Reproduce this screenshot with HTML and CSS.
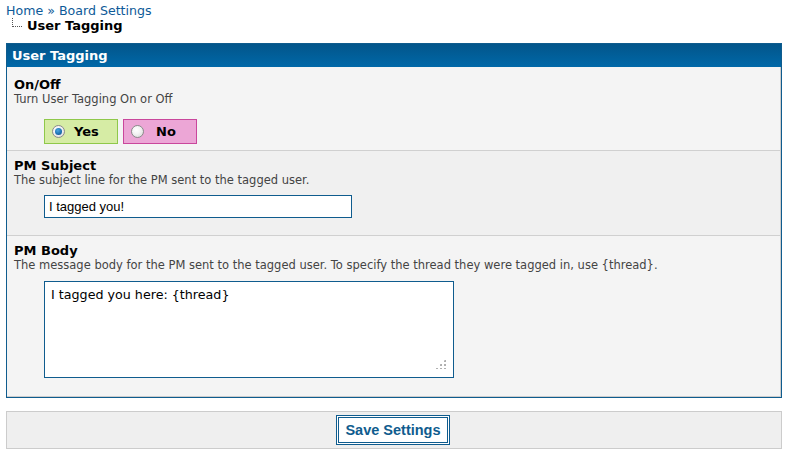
FILE: index.html
```html
<!DOCTYPE html>
<html>
<head>
<meta charset="utf-8">
<link rel="stylesheet" href="styles.css">
</head>
<body>
<div class="nav">
  <div class="crumbs"><a href="#">Home</a> » <a href="#">Board Settings</a></div>
  <div class="active"><span class="tree"></span>User Tagging</div>
</div>
<form class="form">
  <div class="panel">
    <div class="panel-title">User Tagging</div>
    <div class="panel-body">
      <div class="row row-a row-first">
        <div class="label">On/Off</div>
        <div class="desc">Turn User Tagging On or Off</div>
        <div class="control radios">
          <label class="choice yes"><span class="radio checked"></span>Yes</label>
          <label class="choice no"><span class="radio"></span>No</label>
        </div>
      </div>
      <div class="row row-b">
        <div class="label">PM Subject</div>
        <div class="desc">The subject line for the PM sent to the tagged user.</div>
        <div class="control ctl-text">
          <div class="textbox">I tagged you!</div>
        </div>
      </div>
      <div class="row row-a row-last">
        <div class="label">PM Body</div>
        <div class="desc">The message body for the PM sent to the tagged user. To specify the thread they were tagged in, use {thread}.</div>
        <div class="control ctl-area">
          <div class="textarea">I tagged you here: {thread}<span class="grip"></span></div>
        </div>
      </div>
    </div>
  </div>
  <div class="buttons">
    <button type="button" class="submit">Save Settings</button>
  </div>
</form>
</body>
</html>
```
FILE: styles.css
```css
html, body {
  margin: 0;
  padding: 0;
  background: #fff;
}
body {
  padding: 3px 4px 0 6px;
  font-family: "DejaVu Sans", Verdana, sans-serif;
  font-size: 13px;
  color: #000;
}
a {
  color: #0d5a98;
  text-decoration: none;
}
.nav {
  line-height: 15px;
}
.crumbs {
  color: #0d5a98;
  font-size: 12.6px;
}
.active {
  font-weight: bold;
  display: flex;
  align-items: center;
}
.tree {
  display: inline-block;
  width: 9px;
  height: 8px;
  margin: -6px 5px 0 6px;
  border-left: 1px dotted #555;
  border-bottom: 1px dotted #555;
}
.form {
  margin-top: 10px;
}
.panel {
  border: 1px solid #0f5c8e;
}
.panel-title {
  height: 23px;
  line-height: 24px;
  padding-left: 5px;
  color: #fff;
  font-weight: bold;
  background: linear-gradient(#03558a, #0068a8);
}
.panel-body {
  border-right: 1px solid #ccc;
  border-bottom: 1px solid #ccc;
}
.row {
  padding: 8px 7px 0 7px;
  border-bottom: 1px solid #d0d0d0;
}
.row-first {
  padding-top: 11px;
}
.row-last {
  border-bottom: none;
}
.row-a {
  background: #f4f4f4;
}
.row-b {
  background: #f0f0f0;
}
.label {
  font-weight: bold;
  line-height: 14px;
}
.desc {
  font-size: 11.5px;
  line-height: 14px;
  color: #444;
}
.control {
  padding-left: 30px;
}
.radios {
  display: flex;
  gap: 5px;
  padding-top: 13px;
  padding-bottom: 6px;
}
.choice {
  box-sizing: border-box;
  width: 74px;
  height: 25px;
  display: flex;
  align-items: center;
  font-weight: bold;
  padding-left: 7px;
}
.yes {
  background: #d6eca5;
  border: 1px solid #8fc84a;
}
.no {
  background: #eca6d6;
  border: 1px solid #c9479c;
}
.radio {
  box-sizing: border-box;
  width: 13px;
  height: 13px;
  border-radius: 50%;
  border: 1px solid #8a8a8a;
  background: radial-gradient(circle at 40% 35%, #fff 0, #f4f4f4 40%, #d4d4d4 100%);
  margin-right: 9px;
  position: relative;
}
.no .radio {
  margin-right: 12px;
}
.radio.checked::after {
  content: "";
  position: absolute;
  left: 2px;
  top: 2px;
  width: 7px;
  height: 7px;
  border-radius: 50%;
  background: radial-gradient(circle at 40% 35%, #4aa6e0 0, #1a6fb0 60%, #0b4a80 100%);
}
.ctl-text {
  padding-top: 8px;
  padding-bottom: 17px;
}
.textbox {
  box-sizing: border-box;
  width: 308px;
  height: 23px;
  border: 1px solid #0f5c8e;
  background: #fff;
  font-family: "Liberation Sans", Arial, sans-serif;
  font-size: 13px;
  line-height: 21px;
  padding-left: 4px;
}
.ctl-area {
  padding-top: 9px;
  padding-bottom: 18px;
}
.textarea {
  box-sizing: border-box;
  width: 410px;
  height: 97px;
  border: 1px solid #0f5c8e;
  background: #fff;
  font-size: 12.7px;
  line-height: 16px;
  padding: 5px 6px;
  position: relative;
}
.grip {
  position: absolute;
  right: 7px;
  bottom: 8px;
  width: 11px;
  height: 10px;
  background:
    radial-gradient(circle, #b0b0b0 1px, transparent 1.2px) 0 0 / 4px 4px;
  clip-path: polygon(100% 0, 100% 100%, 0 100%);
}
.buttons {
  margin-top: 13px;
  height: 36px;
  border: 1px solid #ccc;
  background: #efefef;
  display: flex;
  justify-content: center;
  align-items: center;
}
.submit {
  box-sizing: border-box;
  width: 114px;
  height: 30px;
  margin-right: 2px;
  border: 3px double #0f5c8e;
  background: #fff;
  color: #0f5c8e;
  font-family: "Liberation Sans", Arial, sans-serif;
  font-weight: bold;
  font-size: 14.5px;
  padding: 0;
}
```
